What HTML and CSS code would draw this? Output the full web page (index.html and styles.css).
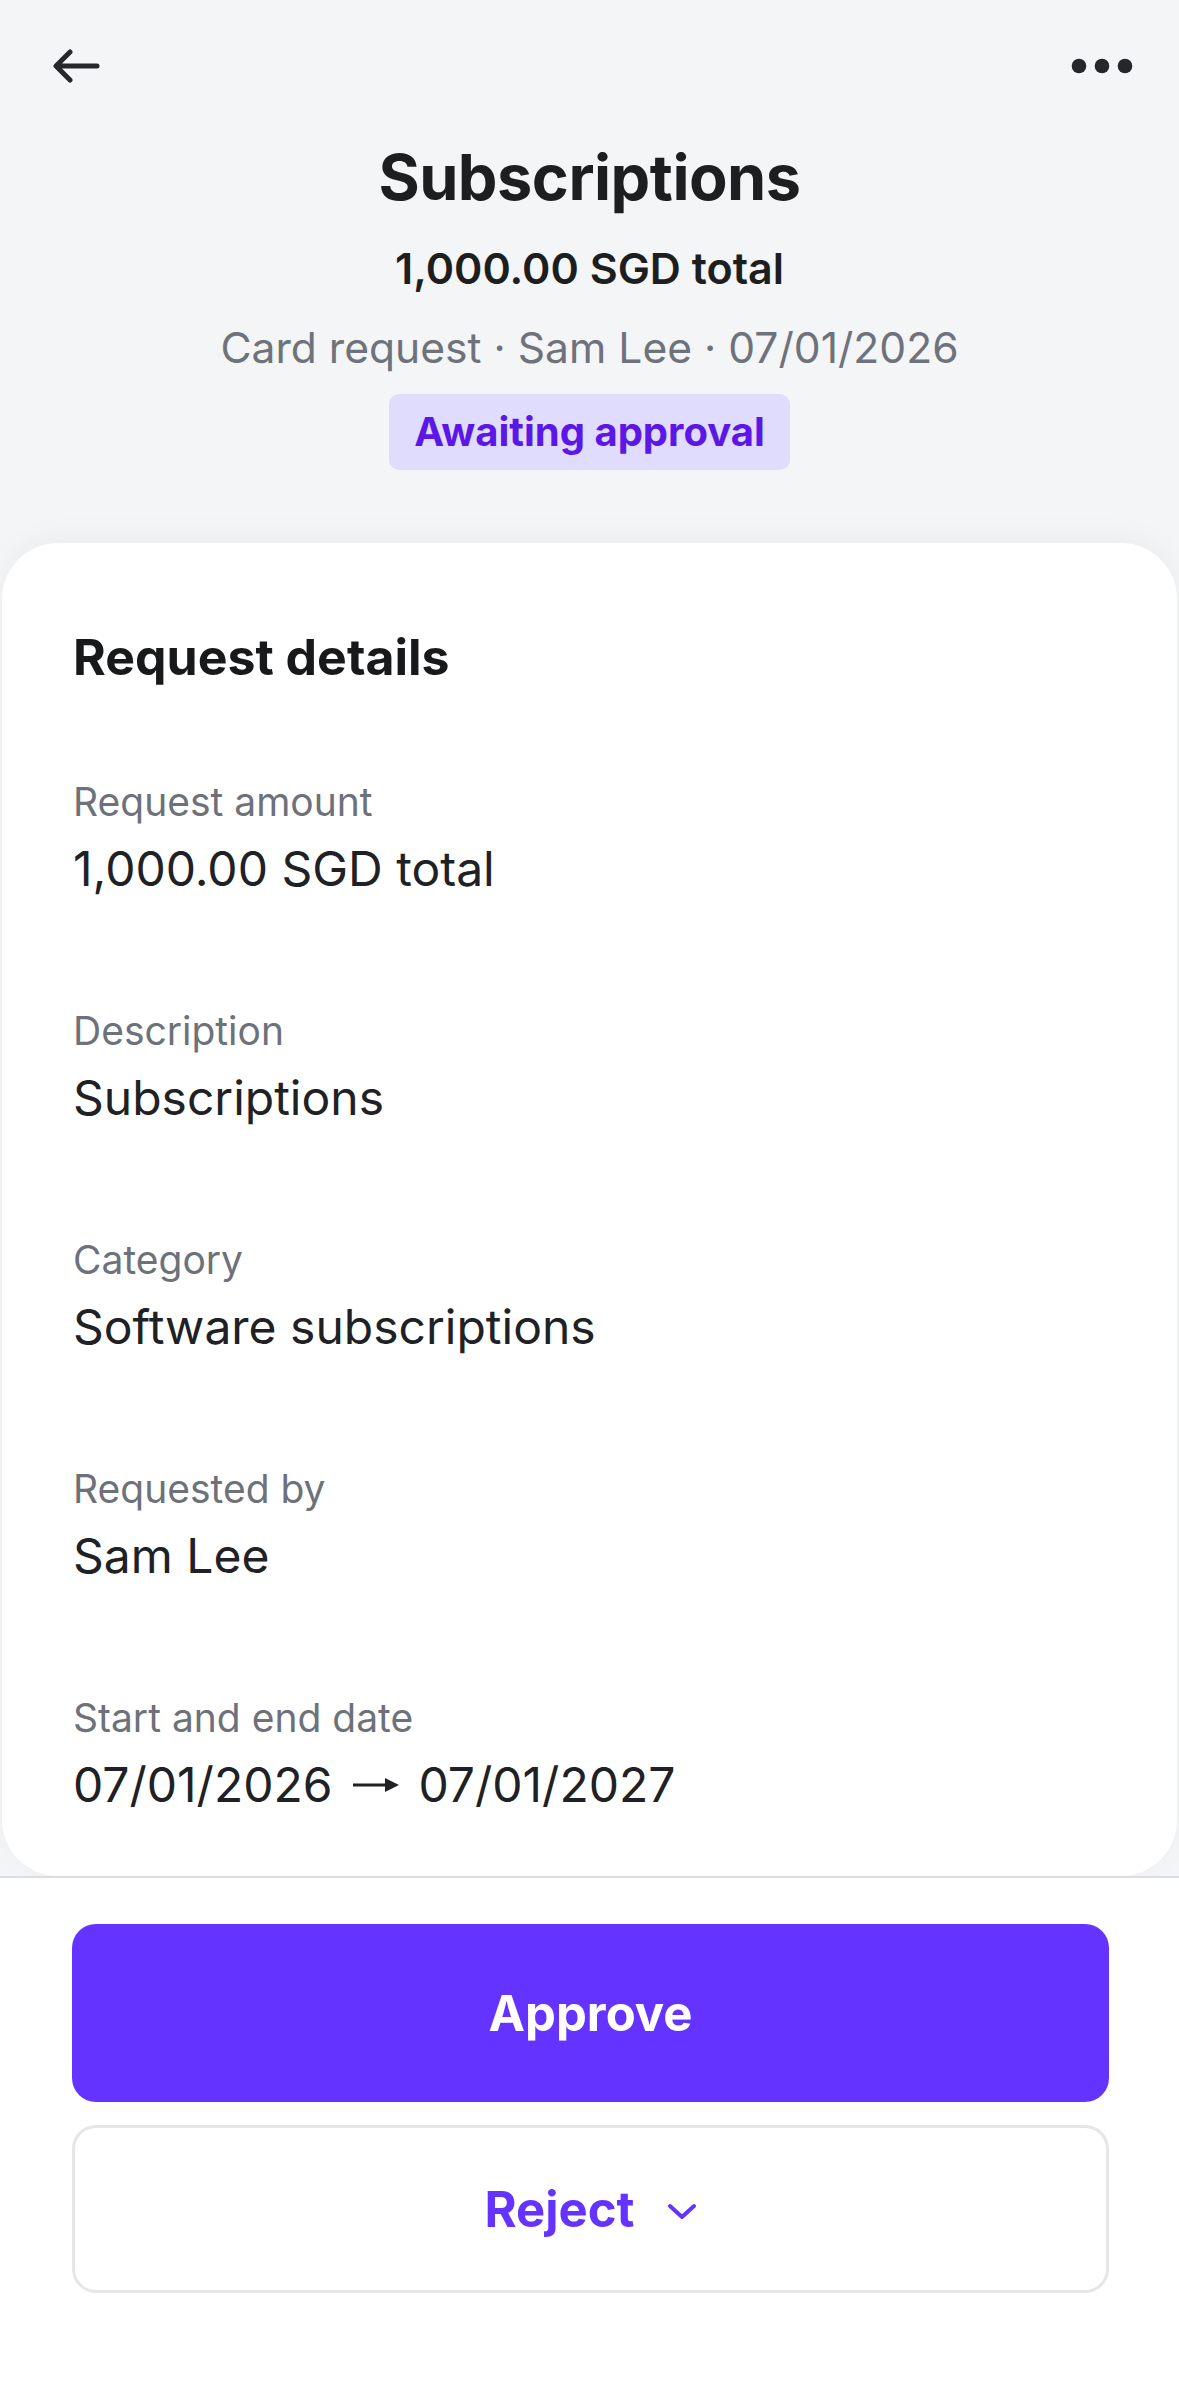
FILE: index.html
```html
<!DOCTYPE html>
<html lang="en">
<head>
    <meta charset="UTF-8">
    <meta name="viewport" content="width=device-width, initial-scale=1.0">
    <title>Subscriptions - Card request</title>
    <link rel="stylesheet" href="styles.css">
</head>
<body>
    <div class="page">
        <!-- top bar -->
        <div class="topbar">
            <svg class="icon-back" width="50" height="34" viewBox="0 0 50 34">
                <path d="M45 17H5M18 3L4 17l14 14" fill="none" stroke="#25272b" stroke-width="5" stroke-linecap="round" stroke-linejoin="round"/>
            </svg>
            <svg class="icon-more" width="62" height="16" viewBox="0 0 62 16">
                <circle cx="8" cy="8" r="7.3" fill="#25272b"/>
                <circle cx="31" cy="8" r="7.3" fill="#25272b"/>
                <circle cx="54" cy="8" r="7.3" fill="#25272b"/>
            </svg>
        </div>

        <!-- header -->
        <div class="header">
            <div class="title">Subscriptions</div>
            <div class="total">1,000.00 SGD total</div>
            <div class="meta">Card request · Sam Lee · 07/01/2026</div>
            <div class="status">Awaiting approval</div>
        </div>

        <!-- details card -->
        <div class="details-card">
            <div class="card-title">Request details</div>

            <div class="detail-row">
                <div class="detail-label">Request amount</div>
                <div class="detail-value">1,000.00 SGD total</div>
            </div>
            <div class="detail-row">
                <div class="detail-label">Description</div>
                <div class="detail-value">Subscriptions</div>
            </div>
            <div class="detail-row">
                <div class="detail-label">Category</div>
                <div class="detail-value">Software subscriptions</div>
            </div>
            <div class="detail-row">
                <div class="detail-label">Requested by</div>
                <div class="detail-value">Sam Lee</div>
            </div>
            <div class="detail-row">
                <div class="detail-label">Start and end date</div>
                <div class="detail-value date-range">
                    <span>07/01/2026</span>
                    <svg class="range-arrow" width="46" height="16" viewBox="0 0 46 16">
                        <path d="M0 8H34" stroke="#202124" stroke-width="3"/>
                        <path d="M32 1L46 8L32 15Z" fill="#202124"/>
                    </svg>
                    <span>07/01/2027</span>
                </div>
            </div>
        </div>

        <!-- actions -->
        <div class="footer">
            <div class="btn btn-approve">Approve</div>
            <div class="btn btn-reject">
                <span>Reject</span>
                <svg class="chevron" width="30" height="16" viewBox="0 0 30 16">
                    <path d="M3 3l12 11L27 3" fill="none" stroke="#6433ff" stroke-width="4" stroke-linecap="round" stroke-linejoin="round"/>
                </svg>
            </div>
        </div>
    </div>
</body>
</html>
```

FILE: styles.css
```css
* {
    margin: 0;
    padding: 0;
    box-sizing: border-box;
}

body {
    font-family: Inter, "Noto Sans", sans-serif;
    background: #f4f5f7;
    color: #1d1e20;
}

.page {
    min-height: 2396px;
    display: flex;
    flex-direction: column;
}

/* top bar */
.topbar {
    height: 132px;
    display: flex;
    align-items: center;
    justify-content: space-between;
    padding: 0 46px 0 52px;
}

/* header */
.header {
    padding-top: 9px;
    display: flex;
    flex-direction: column;
    align-items: center;
    text-align: center;
}

.title {
    font-size: 63px;
    line-height: 72px;
    font-weight: 700;
    letter-spacing: -0.5px;
}

.total {
    margin-top: 30px;
    font-size: 43px;
    line-height: 50px;
    font-weight: 600;
}

.meta {
    margin-top: 29px;
    font-size: 42.6px;
    line-height: 52px;
    color: #6e727b;
}

.status {
    margin-top: 20px;
    height: 76px;
    line-height: 76px;
    padding: 0 25px;
    border-radius: 10px;
    background: #e0dcfd;
    color: #5a17e6;
    font-size: 40px;
    font-weight: 700;
}

/* details card */
.details-card {
    margin: 73px 2px 0;
    padding: 86px 71px 63px;
    background: white;
    border-radius: 56px;
    box-shadow: 0 -6px 30px rgba(0, 0, 0, 0.04);
}

.card-title {
    font-size: 50px;
    line-height: 56px;
    font-weight: 700;
    color: #18191b;
}

.detail-row {
    margin-top: 112px;
}

.card-title + .detail-row {
    margin-top: 95px;
}

.detail-label {
    font-size: 39px;
    line-height: 44px;
    color: #6d717a;
}

.detail-value {
    margin-top: 17px;
    font-size: 48px;
    line-height: 56px;
    color: #202124;
}

.date-range {
    display: flex;
    align-items: center;
    gap: 20px;
}

/* actions */
.footer {
    flex: 1;
    background: white;
    border-top: 2px solid #dcdde0;
    padding: 46px 70px 0 72px;
    display: flex;
    flex-direction: column;
    gap: 23px;
}

.btn {
    display: flex;
    align-items: center;
    justify-content: center;
    border-radius: 24px;
    font-size: 49px;
    font-weight: 700;
}

.btn-approve {
    height: 178px;
    background: #6433ff;
    color: white;
}

.btn-reject {
    height: 168px;
    background: white;
    border: 3px solid #e6e6e8;
    color: #6433ff;
    gap: 32px;
}

.chevron {
    margin-top: 4px;
}
```
